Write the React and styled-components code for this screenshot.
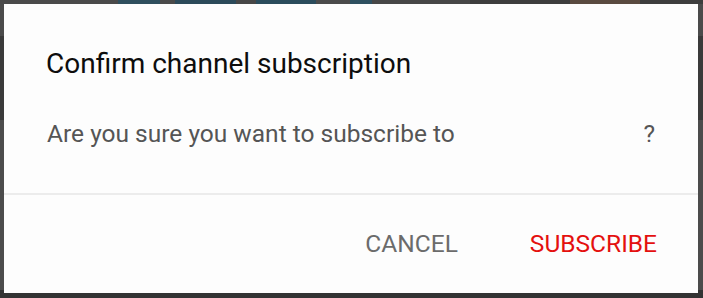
import React from "react"
import styled, {createGlobalStyle} from "styled-components"

const GlobalStyle = createGlobalStyle`
  html, body {
    margin: 0;
    padding: 0;
    height: 100%;
  }
  body {
    font-family: Roboto, "Noto Sans", Arial, sans-serif;
    background: #3c3c3c;
  }
  #root {
    height: 100%;
  }
`

const Backdrop = styled.div`
  height: 100%;
  box-sizing: border-box;
  padding: 4px 5px 5px 4px;
  background:
    linear-gradient(90deg, #4a4a4a 0 118px, #2f4f5e 118px 160px, #4a4a4a 160px 175px, #2c4a5a 175px 236px, #474747 236px 256px, #2b4c5c 256px 316px, #4b4b4b 316px 350px, #2e5060 350px 372px, #474747 372px 470px, #3d3d3d 470px 570px, #5a4a40 570px 640px, #3d3d3d 640px) top / 100% 4px no-repeat,
    linear-gradient(180deg, #4b4b4b 0 36px, #3a3a3a 36px 120px, #4c4c4c 120px 290px, #333333 290px);
`

const Dialog = styled.div`
  height: 100%;
  box-sizing: border-box;
  background: #fdfdfd;
  display: flex;
  flex-direction: column;
`

const Title = styled.h2`
  margin: 0;
  padding: 40px 42px 0 42px;
  font-size: 28px;
  line-height: 40px;
  font-weight: 400;
  color: #0d0d0d;
`

const Message = styled.div`
  display: flex;
  justify-content: space-between;
  padding: 34px 43px 0 43px;
  font-size: 24.5px;
  line-height: 32px;
  color: #555555;
`

const Divider = styled.hr`
  margin: 43px 0 0 0;
  border: none;
  border-top: 2px solid #ececec;
`

const Footer = styled.div`
  display: flex;
  justify-content: flex-end;
  gap: 36px;
  padding: 25px 23px 0 0;
`

const Button = styled.button`
  border: none;
  background: transparent;
  padding: 8px 18px;
  font-family: inherit;
  font-size: 24.5px;
  line-height: 32px;
  font-weight: 400;
  color: ${(p) => (p.$primary ? "#e4100f" : "#6b6b6b")};
  cursor: pointer;
`

const App = () => {
  return (
    <>
      <GlobalStyle />
      <Backdrop>
        <Dialog>
          <Title>Confirm channel subscription</Title>
          <Message>
            <span>Are you sure you want to subscribe to</span>
            <span>?</span>
          </Message>
          <Divider />
          <Footer>
            <Button>CANCEL</Button>
            <Button $primary>SUBSCRIBE</Button>
          </Footer>
        </Dialog>
      </Backdrop>
    </>
  )
}

export default App
